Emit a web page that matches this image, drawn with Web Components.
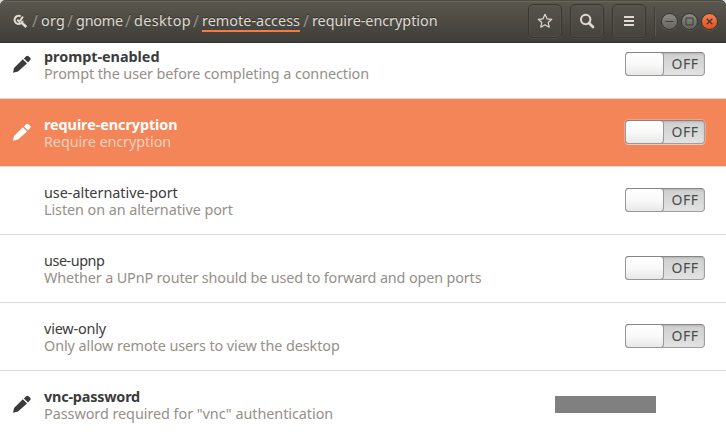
<!DOCTYPE html>
<html lang="en">
<head>
<meta charset="utf-8">
<title>dconf Editor</title>
<style>
html,body{margin:0;width:726px;height:438px;overflow:hidden;background:#fff;font-family:"Noto Sans","Open Sans",sans-serif}
</style>
</head>
<body>
<settings-window></settings-window>
<script>
const define = (name, html, ready) => {
  const t = document.createElement('template');
  t.innerHTML = html;
  customElements.define(name, class extends HTMLElement {
    connectedCallback() {
      if (this.shadowRoot) return;
      this.attachShadow({mode: 'open'}).appendChild(t.content.cloneNode(true));
      if (ready) ready(this, this.shadowRoot);
    }
  });
};

// A single line of text tracked out to a given width.
define('fit-text', `<style>
:host{display:block;white-space:nowrap}
span{display:inline-block;white-space:pre}
</style><span></span>`, (el, root) => {
  const s = root.querySelector('span');
  s.textContent = el.getAttribute('text');
  const w = +el.getAttribute('width');
  if (w) s.style.letterSpacing = ((w - s.getBoundingClientRect().width) / s.textContent.length) + 'px';
});

define('pencil-icon', `<style>:host{display:block;width:18px;height:18px}svg{display:block}</style>
<svg width="18" height="18" viewBox="0 0 18 18" fill="currentColor"><path d="M0 17.8 1 12.9 9.8 4.3 14 8.4 5 16.5ZM10.9 3.4 13.1 1.2Q14.4 0.2 15.6 1.2L17.2 2.8Q18.2 3.9 17.2 5L15 7.4Z"/></svg>`);

define('toggle-switch', `<style>
:host{display:flex;box-sizing:border-box;width:80px;height:24px;margin-bottom:1px;border-radius:4px;border:1px solid #9f9f9f;border-top-color:#858585;background:linear-gradient(#cfcfcf,#e2e2e2);box-shadow:inset 0 1px 2px #0002,0 1px 0 var(--switch-edge,#fff),0 0 0 1px var(--switch-glow,transparent);color:#4b4b4b;font:14px/22px "Noto Sans",sans-serif}
i{box-sizing:border-box;width:39px;height:24px;margin:-1px 0 0 -1px;border:1px solid #989898;border-top-color:#858585;border-radius:4px;background:linear-gradient(#fff,#f9f9f9 50%,#e9e8e7);flex:none}
fit-text{margin-left:7.5px}
</style><i></i><fit-text text="OFF" width="27"></fit-text>`);

define('settings-list', `<style>
:host{display:block;height:395px;overflow:hidden;background:#fff}
.rows{margin-top:-12px}
.row{box-sizing:border-box;display:flex;align-items:center;height:68px;padding:0 21px 0 13px;border-bottom:1px solid #dcdcdc;color:#3b3b3b;font-size:14.4px;line-height:17px}
.row.selected{background:#f38559;color:#fff;--note:#f6cfbd;--switch-edge:#f5cbb8;--switch-glow:#f3a583}
.icon{width:18px;margin:0 13px 1px 0;flex:none}
.text{flex:1}
.note{color:var(--note,#959088)}
.bold{font-weight:700}
.redacted{width:101px;height:17px;margin:0 49px 0 0;background:#808080}
</style><div class="rows"></div>`, (el, root) => {
  root.querySelector('.rows').innerHTML = [
    ['prompt-enabled', 115.5, 'Prompt the user before completing a connection', 325, true],
    ['require-encryption', 133.5, 'Require encryption', 127.2, true],
    ['use-alternative-port', 133.8, 'Listen on an alternative port', 188.8],
    ['use-upnp', 60.4, 'Whether a UPnP router should be used to forward and open ports', 437.4],
    ['view-only', 62, 'Only allow remote users to view the desktop', 295.7],
    ['vnc-password', 96, 'Password required for &quot;vnc&quot; authentication', 289.2, true]
  ].map(([n, nw, d, dw, edited], i) => `<div class="row${i === 1 ? ' selected' : ''}">
    <div class="icon">${edited ? '<pencil-icon></pencil-icon>' : ''}</div>
    <div class="text"><fit-text class="${edited ? 'bold' : ''}" text="${n}" width="${nw}"></fit-text><fit-text class="note" text="${d}" width="${dw}"></fit-text></div>
    ${i === 5 ? '<div class="redacted"></div>' : '<toggle-switch></toggle-switch>'}</div>`).join('');
});

define('path-bar', `<style>
:host{display:flex;align-items:center;flex:1;color:#dfdbd2;font-size:14.4px;line-height:18px;text-shadow:0 -1px #0006}
.logo{display:block;flex:none;margin:0 4px 0 13px}
.sep{width:9px;color:#96938b;font-size:16px}
.sep.after{margin-left:1px}
.seg{margin-right:2px;flex:none}
.link{border-bottom:2px solid #f37b47;margin-top:2px;width:98px;line-height:18px}
</style>
<svg class="logo" width="15" height="15" viewBox="0 0 15 15" fill="none" stroke="#dfdbd2"><path d="M7.7 2.3A4.1 4.1 0 1 0 9.7 6.6" stroke-width="2"/><path d="M8.6 8.6 13.3 13" stroke-width="2.6"/><path d="M4.2 5.7 6.3 7.7 10 2.6" stroke-width="1.9"/></svg>
<div id="parts" style="display:contents"></div>`, (el, root) => {
  root.querySelector('#parts').innerHTML = [['org', 24], ['gnome', 47], ['desktop', 57], ['remote-access', 98], ['require-encryption', 125.5]]
    .map(([t, w], i) => `<span class="sep${i === 4 ? ' after' : ''}">/</span><fit-text class="seg${i === 3 ? ' link' : ''}" text="${t}" width="${w}"></fit-text>`).join('');
});

define('tool-button', `<style>
:host{box-sizing:border-box;display:flex;align-items:center;justify-content:center;width:34px;height:34px;border:1px solid #373631;border-radius:5px;background:linear-gradient(#55534a,#45443e);box-shadow:inset 0 0 0 1px #625f5555,0 1px 0 #66645b66}
</style><slot></slot>`);

define('window-button', `<style>
:host{box-sizing:border-box;display:flex;width:17px;height:17px;border:1px solid #35342f;border-radius:50%;background:var(--fill,linear-gradient(#8b8a85,#65645f));box-shadow:0 1px #67655b88}
</style><slot></slot>`);

define('header-bar', `<style>
:host{box-sizing:border-box;display:flex;align-items:center;height:43px;border-radius:6px 6px 0 0;background:linear-gradient(#5b584e,#3e3d39);border-bottom:1px solid #34332f;box-shadow:inset 0 1px #4d4b43,inset 0 2px #68655a}
.tools{display:flex;gap:8px}
.line{width:1px;height:29px;margin:0 6px 0 8px;background:#3d3c36;box-shadow:1px 0 #5a584f}
.win{display:flex;gap:3px;margin:0 8px 0 0}
.close{--fill:linear-gradient(#f57f55,#e4501d)}
svg{display:block;flex:none}
</style>
<path-bar></path-bar>
<div class="tools">
<tool-button><svg width="16" height="16" viewBox="0 0 16 16" fill="none" stroke="#dfdbd2" stroke-width="1.2" stroke-linejoin="round"><path d="M8 1.3 10 5.8 14.8 6.3 11.2 9.5 12.2 14.2 8 11.8 3.8 14.2 4.8 9.5 1.2 6.3 6 5.8Z"/></svg></tool-button>
<tool-button><svg width="16" height="16" viewBox="0 0 16 16" fill="none" stroke="#dfdbd2"><circle cx="6.7" cy="6.5" r="4.7" stroke-width="2"/><path d="M10 10 14 14" stroke-width="2.7" stroke-linecap="round"/></svg></tool-button>
<tool-button><svg width="16" height="16" viewBox="0 0 16 16" fill="#dfdbd2"><path d="M3 3H13V5H3ZM3 7H13V9H3ZM3 11H13V13H3Z"/></svg></tool-button>
</div><div class="line"></div>
<div class="win">
<window-button><svg width="15" height="15" viewBox="0 0 15 15"><path d="M3.5 7.5H11.5" stroke="#3c3b36"/></svg></window-button>
<window-button><svg width="15" height="15" viewBox="0 0 15 15"><path d="M4 4H11V11H4Z" fill="none" stroke="#3c3b36"/></svg></window-button>
<window-button class="close"><svg width="15" height="15" viewBox="0 0 15 15"><path d="M4.7 4.7 10.3 10.3M10.3 4.7 4.7 10.3" stroke="#3c3b36" stroke-width="1.3"/></svg></window-button>
</div>`);

define('settings-window', `<style>
:host{display:block;width:726px;height:438px;overflow:hidden;background:#d8d9de}
</style><header-bar></header-bar><settings-list></settings-list>`);
</script>
</body>
</html>
